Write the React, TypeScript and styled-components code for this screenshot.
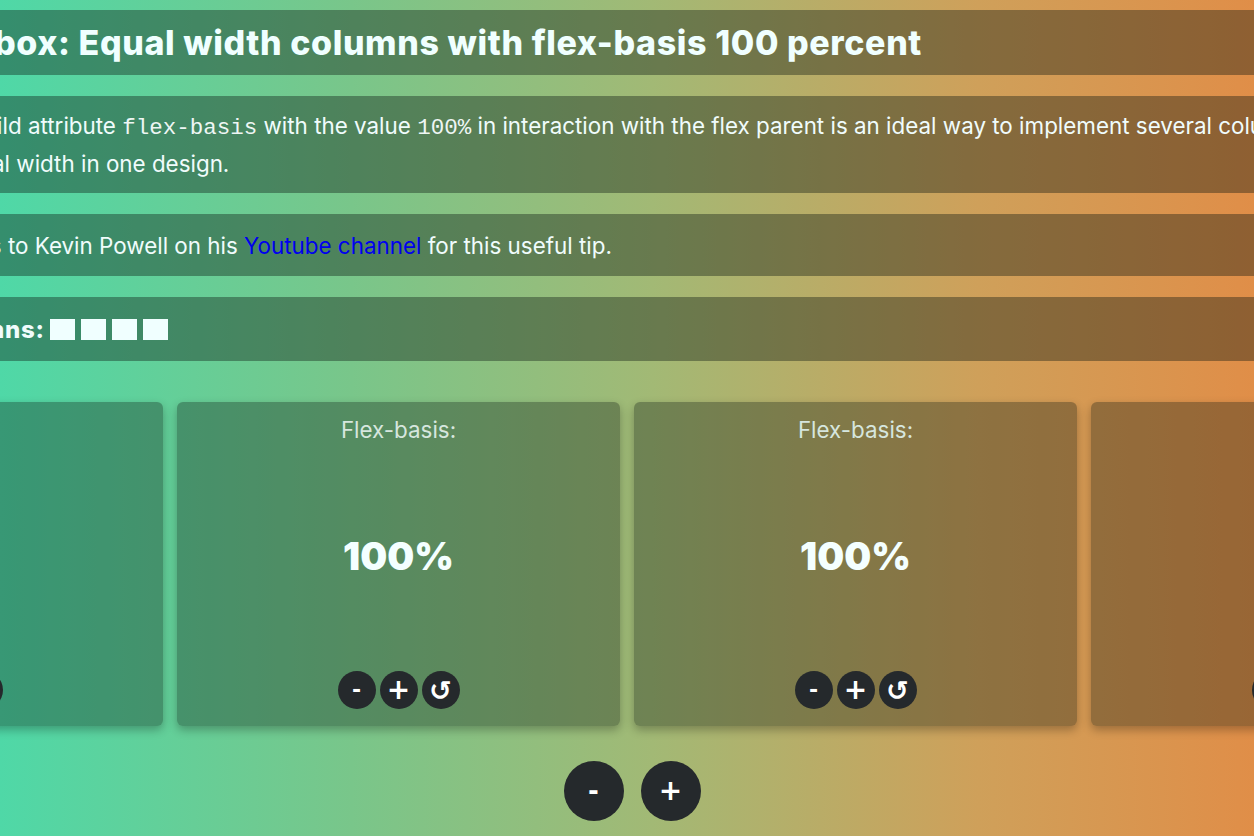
import React from "react";
import styled, { createGlobalStyle } from "styled-components";

const Global = createGlobalStyle`
  html, body {
    margin: 0;
    padding: 0;
    height: 100%;
    overflow: hidden;
  }
  body {
    background: linear-gradient(90deg, #4fd8a7 0%, #79c68a 28%, #a2b975 52%, #cfa05a 78%, #e08e48 100%);
    font-family: Inter, "Open Sans", sans-serif;
    color: #f0fcfc;
  }
`;

const Page = styled.main`
  display: flex;
  flex-direction: column;
  padding-top: 10px;
  min-height: 100vh;
  box-sizing: border-box;
`;

const Bars = styled.div`
  display: flex;
  flex-direction: column;
  gap: 21px;
  margin: 0 -92px;
`;

const Bar = styled.section<{ $h: number }>`
  background: rgba(10, 20, 15, 0.38);
  min-height: ${(p) => p.$h}px;
  box-sizing: border-box;
  padding: 0 16px;
  display: flex;
  align-items: center;
`;

const Title = styled.h1`
  margin: 0 0 0 -2px;
  font-size: 34px;
  font-weight: 800;
  letter-spacing: 0.6px;
  color: #f0ffff;
`;

const Text = styled.p`
  margin: 0;
  font-size: 22.4px;
  line-height: 35px;
  color: #f0fcfc;
`;

const Code = styled.code`
  font-family: "Liberation Mono", "DejaVu Sans Mono", monospace;
  font-size: 22.5px;
  font-weight: 400;
  color: #eef6f4;
`;

const Link = styled.a`
  color: #0000ee;
  text-decoration: none;
`;

const Label = styled.span`
  font-weight: 800;
  font-size: 24px;
  letter-spacing: 0.8px;
  display: inline-flex;
  align-items: center;
  gap: 5px;
`;

const Squares = styled.span`
  display: inline-flex;
  gap: 6px;
`;

const Square = styled.span`
  width: 25px;
  height: 21px;
  background: #f0ffff;
  display: block;
`;

const Cards = styled.div`
  display: flex;
  justify-content: center;
  gap: 14px;
  margin-top: 41px;
`;

const Card = styled.div`
  flex: 0 0 443px;
  height: 324px;
  border-radius: 6px;
  background: rgba(10, 20, 15, 0.33);
  box-shadow: 0 4px 10px rgba(0, 0, 0, 0.28);
  display: flex;
  flex-direction: column;
  align-items: center;
  padding: 15px 0 17px;
  box-sizing: border-box;
`;

const CardLabel = styled.div`
  font-size: 22.4px;
  line-height: 26px;
  color: #d6e6de;
`;

const CardValue = styled.div`
  flex: 1;
  display: flex;
  align-items: center;
  font-size: 38px;
  font-weight: 900;
  color: #f4ffff;
  padding-bottom: 2px;
`;

const BtnRow = styled.div<{ $gap: number }>`
  display: flex;
  gap: ${(p) => p.$gap}px;
`;

const RoundBtn = styled.button<{ $size: number; $fs: number }>`
  width: ${(p) => p.$size}px;
  height: ${(p) => p.$size}px;
  border-radius: 50%;
  border: none;
  padding: 0;
  background: #25292c;
  color: #ffffff;
  font-family: "DejaVu Sans", Inter, sans-serif;
  font-weight: 700;
  font-size: ${(p) => p.$fs}px;
  display: flex;
  align-items: center;
  justify-content: center;
  line-height: 1;
  cursor: pointer;
`;

const Footer = styled.div`
  display: flex;
  justify-content: center;
  gap: 17px;
  margin-top: 35px;
  padding-left: 10px;
`;

function FlexCard() {
  return (
    <Card>
      <CardLabel>Flex-basis:</CardLabel>
      <CardValue>100%</CardValue>
      <BtnRow $gap={4}>
        <RoundBtn $size={38} $fs={22}>-</RoundBtn>
        <RoundBtn $size={38} $fs={28}>+</RoundBtn>
        <RoundBtn $size={38} $fs={27}>↺</RoundBtn>
      </BtnRow>
    </Card>
  );
}

export default function App() {
  return (
    <>
      <Global />
      <Page>
        <Bars>
          <Bar $h={65}>
            <Title>Flexbox: Equal width columns with flex-basis 100 percent</Title>
          </Bar>
          <Bar $h={97}>
            <Text>
              The child attribute <Code>flex-basis</Code> with the value <Code>100%</Code> in
              interaction with the flex parent is an ideal way to implement several columns of
              equal width in one design.
            </Text>
          </Bar>
          <Bar $h={62}>
            <Text>
              Thanks to Kevin Powell on his <Link href="#">Youtube channel</Link> for this useful tip.
            </Text>
          </Bar>
          <Bar $h={64}>
            <Label>
              Columns:
              <Squares>
                <Square />
                <Square />
                <Square />
                <Square />
              </Squares>
            </Label>
          </Bar>
        </Bars>
        <Cards>
          <FlexCard />
          <FlexCard />
          <FlexCard />
          <FlexCard />
        </Cards>
        <Footer>
          <RoundBtn $size={60} $fs={26}>-</RoundBtn>
          <RoundBtn $size={60} $fs={28}>+</RoundBtn>
        </Footer>
      </Page>
    </>
  );
}
